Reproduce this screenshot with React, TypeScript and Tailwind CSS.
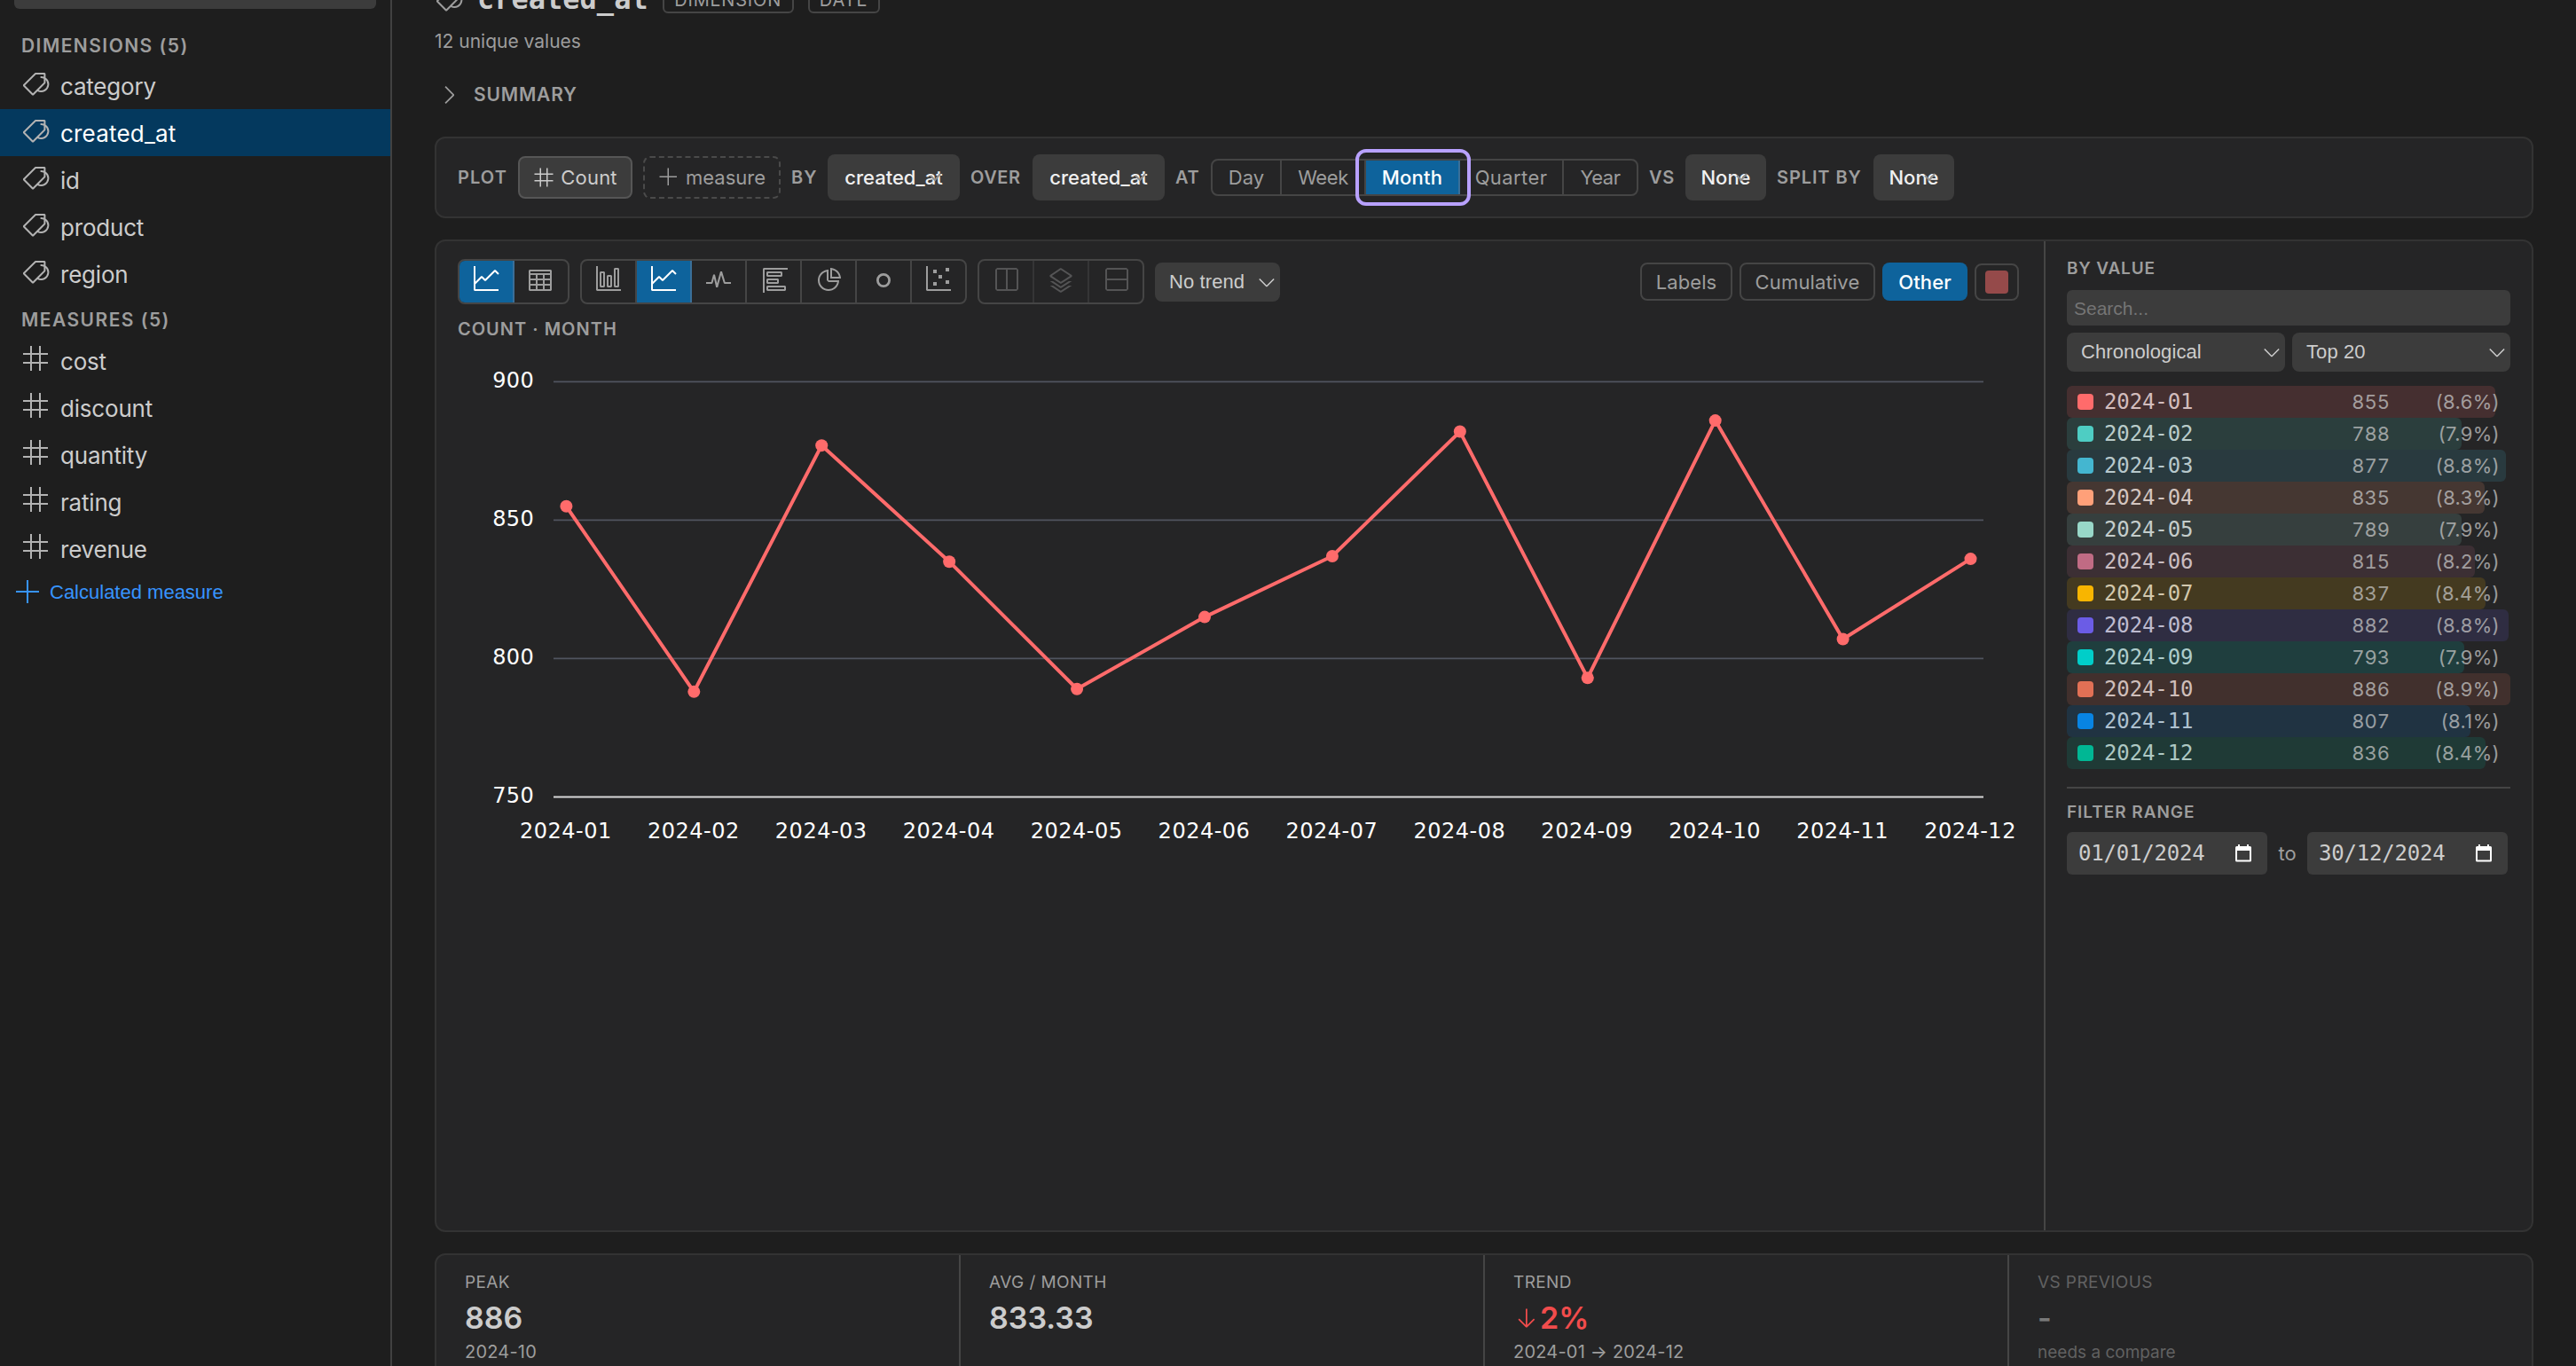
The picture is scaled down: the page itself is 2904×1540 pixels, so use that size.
import { useState, type ReactNode } from 'react';
import {
  VscAdd,
  VscArrowDown,
  VscChevronDown,
  VscChevronRight,
  VscCircle,
  VscGraph,
  VscGraphLine,
  VscGraphScatter,
  VscLayers,
  VscPieChart,
  VscPulse,
  VscSplitHorizontal,
  VscSplitVertical,
  VscSymbolNumeric,
  VscTable,
  VscTag,
} from 'react-icons/vsc';

const dimensions = ['category', 'created_at', 'id', 'product', 'region'];
const measures = ['cost', 'discount', 'quantity', 'rating', 'revenue'];

const grains = [
  { name: 'Day', cell: 'w-[78px] tracking-[0.05px]' },
  { name: 'Week', cell: 'w-[95px] tracking-[-0.4px]' },
  { name: 'Month', cell: 'w-[106px] tracking-[0.2px]' },
  { name: 'Quarter', cell: 'w-[117px] tracking-[0.4px]' },
  { name: 'Year', cell: 'w-[82px] tracking-[-0.5px]' },
];

const chartTypes = [
  { id: 'bar', icon: <VscGraph /> },
  { id: 'line', icon: <VscGraphLine /> },
  { id: 'pulse', icon: <VscPulse /> },
  { id: 'hbar', icon: <VscGraph className="rotate-90" /> },
  { id: 'pie', icon: <VscPieChart /> },
  { id: 'donut', icon: <VscCircle /> },
  { id: 'scatter', icon: <VscGraphScatter /> },
];

const values = [
  { name: '2024-01', count: 855, pct: '8.6', color: '#ff6b6b' },
  { name: '2024-02', count: 788, pct: '7.9', color: '#4ecdc4' },
  { name: '2024-03', count: 877, pct: '8.8', color: '#45b7d1' },
  { name: '2024-04', count: 835, pct: '8.3', color: '#ffa07a' },
  { name: '2024-05', count: 789, pct: '7.9', color: '#98d8c8' },
  { name: '2024-06', count: 815, pct: '8.2', color: '#c06c84' },
  { name: '2024-07', count: 837, pct: '8.4', color: '#f8b500' },
  { name: '2024-08', count: 882, pct: '8.8', color: '#6c5ce7' },
  { name: '2024-09', count: 793, pct: '7.9', color: '#00cec9' },
  { name: '2024-10', count: 886, pct: '8.9', color: '#e17055' },
  { name: '2024-11', count: 807, pct: '8.1', color: '#0984e3' },
  { name: '2024-12', count: 836, pct: '8.4', color: '#00b894' },
];
const maxCount = 886;

function SidebarItem({ name, icon, active, onClick }: { name: string; icon: ReactNode; active?: boolean; onClick?: () => void }) {
  return (
    <button
      onClick={onClick}
      className={`flex h-[53px] w-full items-center gap-3 pl-6 text-[26px] leading-none ${
        active ? 'bg-[#04395e] text-white' : 'text-[#cccccc]'
      }`}
    >
      <span className="mb-[5px] text-[32px] text-[#b3b3b3]">{icon}</span>
      <span className={`pt-[3px] ${name.includes('_') ? 'tracking-[0.2px]' : 'tracking-[-0.2px]'}`}>{name}</span>
    </button>
  );
}

function SidebarHeading({ children, className }: { children: ReactNode; className: string }) {
  return (
    <h2 className={`flex items-center pl-6 text-[21px] font-semibold leading-none tracking-[1.45px] text-[#9d9d9d] ${className}`}>
      {children}
    </h2>
  );
}

function Keyword({ children, className }: { children: ReactNode; className: string }) {
  return (
    <span className={`shrink-0 whitespace-nowrap text-[20px] font-semibold text-[#9d9d9d] ${className}`}>
      {children}
    </span>
  );
}

function ChipSelect({ value, className }: { value: string; className: string }) {
  return (
    <button className={`relative flex h-[52px] shrink-0 items-center justify-center rounded-lg bg-[#3c3c3c] text-[22px] font-medium text-[#f0f0f0] ${className}`}>
      {value}
      <svg className="absolute right-[21px] top-[21px] h-[10px] w-[13px]" viewBox="0 0 13 10" fill="none" stroke="#8c8c8c" strokeWidth="2">
        <path d="M1 3l5 5 6-7" />
      </svg>
    </button>
  );
}

function Dropdown({ value, className }: { value: string; className: string }) {
  return (
    <button className={`flex h-11 items-center justify-between rounded-lg bg-[#3c3c3c] pl-4 font-['Liberation_Sans',sans-serif] text-[22px] leading-none tracking-[0.1px] text-[#cccccc] ${className}`}>
      {value}
      <VscChevronDown className="mr-px size-7" />
    </button>
  );
}

function IconCell({ icon, active, last, disabled }: { icon: ReactNode; active?: boolean; last?: boolean; disabled?: boolean }) {
  return (
    <button
      className={`flex h-full items-start justify-center pt-1.5 text-[32px] ${last ? 'w-[60px]' : 'w-[62px] border-r-2'} ${
        active
          ? 'border-[#3a6f98] bg-[#0e639c] text-white'
          : disabled
            ? 'border-[#353536] text-[#545455]'
            : 'border-[#454545] text-[#9d9d9d]'
      }`}
    >
      {icon}
    </button>
  );
}

function IconGroup({ children }: { children: ReactNode }) {
  return <div className="flex h-[51px] shrink-0 overflow-hidden rounded-lg border-2 border-[#454545]">{children}</div>;
}

function LineChart() {
  const x = (i: number) => 122.4 + i * 143.92;
  const y = (v: number) => 498.4 - (v - 750) * 3.12;
  return (
    <svg width="1760" height="560" className="overflow-visible font-['DejaVu_Sans',sans-serif]">
      {[900, 850, 800, 750].map(v => (
        <g key={v}>
          <line x1="108" x2="1720" y1={y(v)} y2={y(v)} stroke={v === 750 ? '#d8d8d8' : '#50545f'} strokeWidth={v === 750 ? 2 : 1.6} />
          <text x="86" y={y(v) + 7} textAnchor="end" fontSize="24" letterSpacing="0.3" fill="#ffffff">{v}</text>
        </g>
      ))}
      <polyline
        points={values.map((d, i) => `${x(i)},${y(d.count)}`).join(' ')}
        fill="none"
        stroke="#ff6b6b"
        strokeWidth="4"
        strokeLinejoin="round"
      />
      {values.map((d, i) => (
        <g key={d.name}>
          <circle cx={x(i)} cy={y(d.count)} r="7" fill="#ff6b6b" />
          <text x={x(i) - 0.5} y="544.5" textAnchor="middle" fontSize="24" letterSpacing="0.5" fill="#ffffff">{d.name}</text>
        </g>
      ))}
    </svg>
  );
}

function DateInput({ value }: { value: string }) {
  return (
    <div className="flex h-12 w-[226px] items-center justify-between rounded-md bg-[#3c3c3c] pl-[13px] pr-[17px] font-['DejaVu_Sans_Mono',monospace] text-[24px] tracking-[-0.2px] text-[#cccccc]">
      {value}
      <svg width="20" height="20" viewBox="0 0 20 20" fill="#ffffff">
        <path fillRule="evenodd" d="M4 0h2v2h8V0h2v2h1.5a1.5 1.5 0 0 1 1.500 1.500V18a1.500 1.500 0 0 1-1.500 1.500h-15A1.500 1.500 0 0 1 1 18V3.500A1.500 1.500 0 0 1 2.500 2H4zM3 7v10.500h14V7z" />
      </svg>
    </div>
  );
}

function Stat({ label, value, note, last }: { label: string; value: ReactNode; note?: string; last?: boolean }) {
  return (
    <div className={`h-full flex-1 pl-8 pt-[21px] leading-none ${last ? '' : 'border-r-2 border-[#454545]'}`}>
      <div className={last ? 'opacity-50' : ''}>
        <div className="h-5 text-[19px] leading-5 tracking-[0.4px] text-[#9d9d9d]">{label}</div>
        <div className="mt-3 flex h-9 items-center text-[34px] font-semibold text-[#cccccc]">{value}</div>
        <div className={`mt-2.5 flex h-5 items-center text-[#9d9d9d] ${last ? 'text-[19px]' : 'text-[20px] tracking-[0.2px]'}`}>{note}</div>
      </div>
    </div>
  );
}

export default function App() {
  const [field, setField] = useState('created_at');
  const [grain, setGrain] = useState('Month');
  const [chart, setChart] = useState('line');

  return (
    <div className="flex h-[1540px] w-[2904px] overflow-hidden bg-[#1e1e1e] font-[Inter,sans-serif] text-[22px] leading-none text-[#cccccc]">
      {/* Sidebar */}
      <aside className="w-[442px] shrink-0 border-r-2 border-[#414141]">
        <div className="mx-4 h-[10px] rounded-b-md bg-[#3c3c3c]" />
        <SidebarHeading className="h-[60px] pt-[22px]">DIMENSIONS (5)</SidebarHeading>
        {dimensions.map(name => (
          <SidebarItem key={name} name={name} icon={<VscTag />} active={name === field} onClick={() => setField(name)} />
        ))}
        <SidebarHeading className="h-[45px] pt-[5px]">MEASURES (5)</SidebarHeading>
        {measures.map(name => (
          <SidebarItem key={name} name={name} icon={<VscSymbolNumeric />} active={name === field} onClick={() => setField(name)} />
        ))}
        <button className="mt-[7px] flex h-8 items-center gap-2 pl-4 font-['Liberation_Sans',sans-serif] text-[22px] text-[#3794ff]">
          <VscAdd className="size-8" />
          Calculated measure
        </button>
      </aside>

      <main className="flex w-[2414px] shrink-0 flex-col pl-12">
        {/* Header */}
        <div className="-mt-[18px] flex h-9 shrink-0 items-center gap-4">
          <VscTag className="mb-0.5 size-8 text-[#9d9d9d]" />
          <h1 className="mb-0.5 font-['DejaVu_Sans_Mono',monospace] text-[32px] font-bold leading-none">created_at</h1>
          <span className="flex h-[30px] w-[148px] items-center justify-center rounded-md border-2 border-[#454545] text-[20px] tracking-[0.8px] text-[#9d9d9d]">DIMENSION</span>
          <span className="flex h-[30px] w-[81px] items-center justify-center rounded-md border-2 border-[#454545] text-[20px] tracking-[1px] text-[#9d9d9d]">DATE</span>
        </div>
        <p className="mt-[18px] text-[21px] leading-[21px] text-[#9d9d9d]">12 unique values</p>
        <button className="mt-[33px] flex h-8 shrink-0 items-center gap-3 pt-px text-[21px] font-semibold tracking-[0.8px] text-[#9d9d9d]">
          <VscChevronRight className="size-8" />
          SUMMARY
        </button>

        {/* Query bar */}
        <div className="mt-8 flex h-[92px] shrink-0 items-center gap-3 rounded-xl border-2 border-[#333333] bg-[#252526] pl-6">
          <Keyword className="w-14 tracking-[1.1px]">PLOT</Keyword>
          <button className="flex h-12 w-[129px] shrink-0 items-center justify-center gap-[7px] rounded-lg border-2 border-[#565656] bg-[#3c3c3c] tracking-[0.2px]">
            <VscSymbolNumeric className="size-6" />
            Count
          </button>
          <button className="flex h-12 w-[155px] shrink-0 items-center justify-center gap-[7px] rounded-lg border-2 border-dashed border-[#4a4a4a] text-[#9d9d9d]">
            <VscAdd className="size-6" />
            measure
          </button>
          <Keyword className="w-[29px] tracking-[1px]">BY</Keyword>
          <ChipSelect value="created_at" className="w-[149px]" />
          <Keyword className="w-[58px] tracking-[0.6px]">OVER</Keyword>
          <ChipSelect value="created_at" className="w-[149px]" />
          <Keyword className="w-7 tracking-[0.6px]">AT</Keyword>
          <div className="flex h-[42px] shrink-0 rounded-lg border-2 border-[#454545]">
            {grains.map((g, i) => (
              <button
                key={g.name}
                onClick={() => setGrain(g.name)}
                className={`relative flex h-full items-center justify-center ${g.cell} ${i < grains.length - 1 ? 'border-r-2' : ''} ${
                  g.name === grain ? 'z-10 border-[#3a6f98] bg-[#0e639c] font-medium text-white' : 'border-[#454545] text-[#9d9d9d]'
                }`}
              >
                {g.name}
                {g.name === grain && <span className="absolute -inset-y-[13px] -left-3 -right-[14px] rounded-xl border-4 border-[#b8a1ff]" />}
              </button>
            ))}
          </div>
          <Keyword className="w-[29px] tracking-[0.8px]">VS</Keyword>
          <ChipSelect value="None" className="w-[91px]" />
          <Keyword className="w-[97px] tracking-[0.9px]">SPLIT BY</Keyword>
          <ChipSelect value="None" className="w-[91px]" />
        </div>

        {/* Chart panel */}
        <div className="mt-6 flex h-[1119px] shrink-0 overflow-hidden rounded-xl border-2 border-[#333333] bg-[#252526]">
          <section className="w-[1814px] shrink-0 border-r-2 border-[#454545] pl-6 pr-7 pt-5">
            <div className="flex items-center gap-3">
              <IconGroup>
                <IconCell icon={<VscGraphLine />} active />
                <IconCell icon={<VscTable />} last />
              </IconGroup>
              <IconGroup>
                {chartTypes.map((t, i) => (
                  <div key={t.id} onClick={() => setChart(t.id)}>
                    <IconCell icon={t.icon} active={t.id === chart} last={i === chartTypes.length - 1} />
                  </div>
                ))}
              </IconGroup>
              <IconGroup>
                <IconCell icon={<VscSplitHorizontal />} disabled />
                <IconCell icon={<VscLayers />} disabled />
                <IconCell icon={<VscSplitVertical />} disabled last />
              </IconGroup>
              <Dropdown value="No trend" className="w-[141px]" />
              <div className="ml-auto flex items-center gap-2 text-[#9d9d9d]">
                <button className="h-[43px] w-[104px] rounded-lg border-2 border-[#454545] tracking-[0.1px]">Labels</button>
                <button className="h-[43px] w-[153px] rounded-lg border-2 border-[#454545] tracking-[0.15px]">Cumulative</button>
                <button className="h-[43px] w-24 rounded-lg bg-[#0e639c] font-medium tracking-[0.1px] text-white">Other</button>
                <button className="flex h-[42px] w-[50px] items-center justify-center rounded-lg border-2 border-[#454545]">
                  <span className="size-[26px] rounded bg-[#954a4a]" />
                </button>
              </div>
            </div>
            <h3 className="mt-[18px] h-5 text-[20px] font-semibold leading-5 tracking-[1px] text-[#9d9d9d]">COUNT · MONTH</h3>
            <div className="mt-[19px]">
              <LineChart />
            </div>
          </section>

          {/* Values */}
          <section className="flex flex-1 flex-col px-6 pt-[21px]">
            <h3 className="h-5 text-[19px] font-semibold leading-5 tracking-[0.8px] text-[#9d9d9d]">BY VALUE</h3>
            <div className="mt-3.5 flex h-10 items-center rounded-md bg-[#3c3c3c] pl-2 font-['Liberation_Sans',sans-serif] text-[21px] text-[#757575]">
              Search...
            </div>
            <div className="mt-2 flex gap-2">
              <Dropdown value="Chronological" className="flex-1" />
              <Dropdown value="Top 20" className="flex-1" />
            </div>
            <ul className="mt-4">
              {values.map(v => (
                <li key={v.name} className="relative flex h-9 items-center pl-3">
                  <span
                    className="absolute inset-y-0 left-0 rounded-md opacity-15"
                    style={{ width: `${(v.count / maxCount) * 100}%`, backgroundColor: v.color }}
                  />
                  <span className="size-[18px] rounded" style={{ backgroundColor: v.color }} />
                  <span className="ml-3 font-['DejaVu_Sans_Mono',monospace] text-[24px] tracking-[-0.12px]">{v.name}</span>
                  <span className="ml-auto text-right tabular-nums opacity-70">{v.count}</span>
                  <span className="w-[136px] pr-3 text-right tracking-[0.35px] opacity-70">({v.pct}%)</span>
                </li>
              ))}
            </ul>
            <div className="mt-5 border-t-2 border-[#454545] pt-[17px]">
              <h3 className="h-5 text-[19px] font-semibold leading-5 tracking-[0.95px] text-[#9d9d9d]">FILTER RANGE</h3>
              <div className="mt-3 flex items-center text-[#9d9d9d]">
                <DateInput value="01/01/2024" />
                <span className="w-[45px] text-center">to</span>
                <DateInput value="30/12/2024" />
              </div>
            </div>
          </section>
        </div>

        {/* Stats */}
        <div className="mt-6 flex h-[160px] shrink-0 rounded-xl border-2 border-[#333333] bg-[#252526]">
          <Stat label="PEAK" value="886" note="2024-10" />
          <Stat label="AVG / MONTH" value="833.33" />
          <Stat
            label="TREND"
            value={
              <span className="flex items-center gap-0.5 text-[#f14c4c]">
                <VscArrowDown className="size-7" />
                2%
              </span>
            }
            note="2024-01 → 2024-12"
          />
          <Stat label="VS PREVIOUS" value="-" note="needs a compare" last />
        </div>
      </main>
    </div>
  );
}
